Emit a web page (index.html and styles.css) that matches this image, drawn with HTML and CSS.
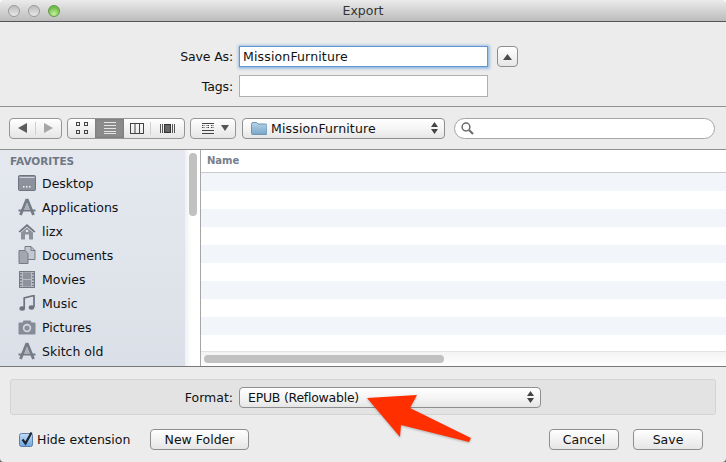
FILE: index.html
```html
<!DOCTYPE html>
<html>
<head>
<title>Export</title>
<link rel="stylesheet" href="styles.css">
</head>
<body>

<div class="window">
  <div class="titlebar">
    <div class="lights">
      <span class="light"></span>
      <span class="light"></span>
      <span class="light light-green"></span>
    </div>
    <div class="title">Export</div>
  </div>

  <div class="form">
    <label class="form-label">Save As:</label>
    <div class="field field-focus">MissionFurniture</div>
    <button class="btn btn-up"><svg width="9" height="6" viewBox="0 0 9 6"><path d="M4.5 0 9 6H0z" fill="#4a4a4a"/></svg></button>
    <label class="form-label">Tags:</label>
    <div class="field"></div>
  </div>

  <div class="toolbar">
    <div class="seg seg-nav">
      <span class="seg-item seg-back"><svg width="9" height="10" viewBox="0 0 9 10"><path d="M0 5 9 0v10z" fill="#5c5c5c"/></svg></span>
      <span class="seg-item seg-forward"><svg width="9" height="10" viewBox="0 0 9 10"><path d="M9 5 0 0v10z" fill="#a6a6a6"/></svg></span>
    </div>

    <div class="seg seg-views">
      <span class="seg-item view-icons">
        <svg width="12" height="12" viewBox="0 0 12 12" fill="none" stroke="#444"><rect x=".5" y=".5" width="3" height="3"/><rect x="8.5" y=".5" width="3" height="3"/><rect x=".5" y="8.5" width="3" height="3"/><rect x="8.5" y="8.5" width="3" height="3"/></svg>
      </span>
      <span class="seg-item view-list">
        <svg width="12" height="12" viewBox="0 0 12 12" stroke="#e4e4e4"><path d="M0 .5h12M0 3.5h12M0 6.5h12M0 9.5h12M0 11.5h12"/></svg>
      </span>
      <span class="seg-item view-columns">
        <svg width="14" height="11" viewBox="0 0 14 11" fill="none" stroke="#444"><rect x=".5" y=".5" width="13" height="10"/><path d="M5 .5v10M9.5 .5v10"/></svg>
      </span>
      <span class="seg-item view-flow">
        <svg width="15" height="11" viewBox="0 0 15 11"><path d="M.5 1v9M2.5 1v9M12.5 1v9M14.5 1v9" stroke="#555" fill="none"/><rect x="4.5" y="1.5" width="6" height="8" fill="#666" stroke="#333"/></svg>
      </span>
    </div>

    <div class="seg seg-arrange">
      <svg width="12" height="11" viewBox="0 0 12 11" fill="none" stroke="#444"><path d="M0 .5h12M0 7.5h12M0 10.5h12"/><path d="M0 2.500h3M4.500 2.500h3M9 2.500h3M0 4.500h3M4.500 4.500h3M9 4.500h3" stroke-dasharray="1 .5"/></svg>
      <svg width="8" height="6" viewBox="0 0 8 6"><path d="M0 0h8L4 6z" fill="#555"/></svg>
    </div>

    <div class="popup popup-path">
      <svg class="folder" width="16" height="13" viewBox="0 0 16 13"><path d="M.5 2.500Q.5 .5 2 .5h3.500l1.500 1.500h7.500q1.500 0 1.500 1.500v8q0 1-1 1H1.500q-1 0-1-1z" fill="url(#folderFill)" stroke="#6d95b5"/><defs><linearGradient id="folderFill" x1="0" y1="0" x2="0" y2="1"><stop offset="0" stop-color="#b9d4e8"/><stop offset="1" stop-color="#79a6c8"/></linearGradient></defs></svg>
      <span class="popup-text path-text">MissionFurniture</span>
      <svg class="updown" width="7" height="12" viewBox="0 0 7 12"><path d="M3.500 0 7 5H0zM3.500 12 0 7h7z" fill="#444"/></svg>
    </div>

    <div class="search">
      <svg width="13" height="13" viewBox="0 0 13 13" fill="none" stroke="#6b6b6b"><circle cx="5" cy="5" r="3.900" stroke-width="1.500"/><path d="M8 8l4 4" stroke-width="2.200"/></svg>
    </div>
  </div>

  <div class="browser">
    <div class="sidebar">
      <div class="side-head">FAVORITES</div>

      <div class="side-item">
        <svg class="side-icon" width="18" height="16" viewBox="0 0 18 16"><rect x=".5" y=".5" width="17" height="15" rx="1" fill="#8b929c" stroke="#6d747f"/><rect x="1.500" y="2" width="15" height="1" fill="#cfd3da"/><path d="M5 11h1.500v1.500H5zM8 11h1.500v1.500H8zM11 11h1.500v1.500H11z" fill="#f2f3f5"/></svg>
        <span>Desktop</span>
      </div>
      <div class="side-item">
        <svg class="side-icon" width="18" height="18" viewBox="0 0 18 18"><path d="M9 1 2.500 17M9 1l6.500 16" stroke="#757c87" stroke-width="2.800" fill="none"/><path d="M.5 12.500h17" stroke="#757c87" stroke-width="2"/><path d="M9 5 6.500 11.500h5z" fill="#a9afb8"/></svg>
        <span>Applications</span>
      </div>
      <div class="side-item">
        <svg class="side-icon" width="18" height="17" viewBox="0 0 18 17"><path d="M9 1 .5 8.500 2 9.500 9 3.500l7 6 1.500-1z" fill="#6f7681"/><path d="M3 9.500 9 4.500l6 5v7h-4v-5H7v5H3z" fill="#8b929c"/><circle cx="9" cy="8" r="1.300" fill="#e6e8ec"/></svg>
        <span>lizx</span>
      </div>
      <div class="side-item">
        <svg class="side-icon" width="18" height="18" viewBox="0 0 18 18"><path d="M7 .5h6l4 4v9H7z" fill="#c4c8cf" stroke="#757c87"/><path d="M1 4.500h6l3 3v10H1z" fill="#a2a8b1" stroke="#757c87"/><path d="M13 .5v4h4" fill="none" stroke="#757c87"/></svg>
        <span>Documents</span>
      </div>
      <div class="side-item">
        <svg class="side-icon side-icon-narrow" width="16" height="17" viewBox="0 0 16 17"><rect x=".5" y=".5" width="15" height="16" fill="#b9bec6" stroke="#727985"/><rect x="4" y="1.500" width="8" height="6.500" fill="#8c939d"/><rect x="4" y="9" width="8" height="6.500" fill="#8c939d"/><path d="M2 2v13M14 2v13" stroke="#686f7a" stroke-width="1.600" stroke-dasharray="1.500 1.500"/></svg>
        <span>Movies</span>
      </div>
      <div class="side-item">
        <svg class="side-icon side-icon-narrow" width="16" height="16" viewBox="0 0 16 16"><path d="M5.200 13V3L15 .5V12" stroke="#6d747f" stroke-width="1.700" fill="none"/><ellipse cx="3.200" cy="13.500" rx="2.800" ry="2.200" fill="#6d747f"/><ellipse cx="12.500" cy="12.500" rx="2.800" ry="2.200" fill="#6d747f"/></svg>
        <span>Music</span>
      </div>
      <div class="side-item">
        <svg class="side-icon" width="18" height="15" viewBox="0 0 18 15"><path d="M1.500 2.500h3l1-2h7l1 2h3q1 0 1 1v10q0 1-1 1h-15q-1 0-1-1v-10q0-1 1-1z" fill="#858c97"/><circle cx="9" cy="8" r="4.200" fill="#d6d9de"/><circle cx="9" cy="8" r="2.600" fill="#8a919c"/></svg>
        <span>Pictures</span>
      </div>
      <div class="side-item">
        <svg class="side-icon" width="18" height="18" viewBox="0 0 18 18"><path d="M9 1 2.500 17M9 1l6.500 16" stroke="#757c87" stroke-width="2.800" fill="none"/><path d="M.5 12.500h17" stroke="#757c87" stroke-width="2"/><path d="M9 5 6.500 11.500h5z" fill="#a9afb8"/></svg>
        <span>Skitch old</span>
      </div>
    </div>

    <div class="side-scroll"><div class="side-thumb"></div></div>

    <div class="list">
      <div class="list-head">Name</div>
      <div class="list-rows">
        <div class="row"></div><div class="row"></div><div class="row"></div>
        <div class="row"></div><div class="row"></div><div class="row"></div>
        <div class="row"></div><div class="row"></div><div class="row"></div>
      </div>
      <div class="hscroll"><div class="hthumb"></div></div>
    </div>
  </div>

  <div class="footer">
    <div class="format-box">
      <label class="format-label">Format:</label>
      <div class="popup popup-format">
        <span class="popup-text format-text">EPUB (Reflowable)</span>
        <svg class="updown" width="7" height="12" viewBox="0 0 7 12"><path d="M3.500 0 7 5H0zM3.500 12 0 7h7z" fill="#444"/></svg>
      </div>
    </div>
    <div class="actions">
      <span class="check">
        <svg width="16" height="16" viewBox="0 0 16 16"><rect x=".5" y="2.500" width="13" height="13" rx="2" fill="url(#checkFill)" stroke="#5b7fa8"/><path d="M3.500 8.500l3 4 6-11" fill="none" stroke="#1c2530" stroke-width="2.200"/><defs><linearGradient id="checkFill" x1="0" y1="0" x2="0" y2="1"><stop offset="0" stop-color="#c3dcf5"/><stop offset="1" stop-color="#6fa6de"/></linearGradient></defs></svg>
      </span>
      <span class="check-label">Hide extension</span>
      <button class="btn btn-folder">New Folder</button>
      <span class="spacer"></span>
      <button class="btn btn-cancel">Cancel</button>
      <button class="btn btn-save">Save</button>
    </div>
  </div>

  <svg class="red-arrow" width="110" height="52" viewBox="0 0 110 52">
    <path d="M6 4 56 1 49 14 110 44 108 48 40 31 39 43z" fill="#ff2f00"/>
  </svg>
</div>

</body>
</html>
```

FILE: styles.css
```css
html, body {
  margin: 0;
  height: 100%;
}

body {
  font-family: "DejaVu Sans", sans-serif;
  font-size: 12.5px;
  color: #111;
  background: linear-gradient(#fff 50%, #666 50%);
  overflow: hidden;
}

.window {
  position: relative;
  display: flex;
  flex-direction: column;
  width: 726px;
  height: 462px;
  background: #ececec;
  border-radius: 4px;
  overflow: hidden;
}

/* title bar */
.titlebar {
  display: flex;
  align-items: center;
  height: 21px;
  flex: none;
  background: linear-gradient(#ebebeb, #bcbcbc);
  border-bottom: 1px solid #555;
}

.lights {
  display: flex;
  gap: 8px;
  width: 60px;
  padding-left: 8px;
  box-sizing: border-box;
  margin-right: -60px;
}

.light {
  width: 12px;
  height: 12px;
  flex: none;
  border-radius: 50%;
  box-sizing: border-box;
  border: 1px solid #9a9a9a;
  background: linear-gradient(#bcbcbc, #e8e8e8);
}

.light-green {
  border-color: #5f9a45;
  background: radial-gradient(circle at 50% 80%, #c5f09a, #6fbd4c 70%);
}

.title {
  flex: 1;
  text-align: center;
  color: #333;
}

/* save as / tags */
.form {
  display: grid;
  grid-template-columns: 233px 249px 23px;
  grid-template-rows: 21px 22px;
  column-gap: 6px;
  row-gap: 8px;
  align-items: center;
  height: 84px;
  flex: none;
  box-sizing: border-box;
  padding-top: 24px;
}

.form-label {
  text-align: right;
  letter-spacing: -.15px;
}

.field {
  height: 22px;
  box-sizing: border-box;
  background: #fff;
  border: 1px solid #b0b0b0;
  line-height: 20px;
  padding-left: 3px;
  letter-spacing: .15px;
}

.field-focus {
  height: 21px;
  border: 1px solid #5f97d2;
  box-shadow: 0 0 3px 1.5px #85b0dd;
  line-height: 20px;
}

.btn {
  font-family: inherit;
  font-size: 12.5px;
  color: #111;
  height: 21px;
  padding: 0;
  box-sizing: border-box;
  background: linear-gradient(#fff, #f2f2f2 50%, #e6e6e6);
  border: 1px solid #8e8e8e;
  border-radius: 4px;
}

.btn-up {
  display: flex;
  align-items: center;
  justify-content: center;
  margin-left: 3px;
  width: 21px;
}

/* toolbar */
.toolbar {
  display: flex;
  align-items: center;
  height: 42px;
  flex: none;
  padding-left: 9px;
  border-top: 1px solid #909090;
}

.seg {
  display: flex;
  align-items: center;
  height: 21px;
  box-sizing: border-box;
  background: linear-gradient(#fff, #f2f2f2 50%, #e6e6e6);
  border: 1px solid #959595;
  border-radius: 4px;
  overflow: hidden;
}

.seg-item {
  display: flex;
  align-items: center;
  justify-content: center;
  height: 100%;
  box-sizing: border-box;
}

.seg-nav {
  width: 53px;
}

.seg-back {
  width: 26px;
  border-right: 1px solid #d0d0d0;
  height: 13px;
}

.seg-forward {
  width: 25px;
}

.seg-views {
  width: 118px;
  margin-left: 5px;
}

.view-icons {
  width: 27px;
}

.view-list {
  width: 29px;
  background: #8b8b8b;
  box-shadow: inset 0 0 2px #666;
}

.view-columns {
  width: 27px;
  border-right: 1px solid #d0d0d0;
  height: 13px;
}

.view-flow {
  width: 33px;
}

.seg-arrange {
  width: 46px;
  margin-left: 5px;
  gap: 7px;
  padding-left: 11px;
}

.popup {
  display: flex;
  align-items: center;
  height: 21px;
  box-sizing: border-box;
  background: linear-gradient(#fff, #f5f5f5 50%, #e6e6e6);
  border: 1px solid #8e8e8e;
  border-radius: 4px;
}

.popup-path {
  width: 203px;
  margin-left: 6px;
  padding-left: 8px;
}

.folder {
  margin-right: 4px;
}

.popup-text {
  flex: 1;
}

.path-text {
  letter-spacing: .15px;
}

.format-text {
  letter-spacing: -.25px;
}

.updown {
  margin-right: 6px;
}

.search {
  display: flex;
  align-items: center;
  width: 261px;
  height: 21px;
  margin-left: 9px;
  padding-left: 6px;
  box-sizing: border-box;
  background: #fff;
  border: 1px solid #a5a5a5;
  border-radius: 11px;
}

/* file browser */
.browser {
  display: flex;
  height: 216px;
  flex: none;
  border-top: 1px solid #909090;
  border-bottom: 1px solid #787878;
  overflow: hidden;
}

.sidebar {
  width: 185px;
  flex: none;
  background: linear-gradient(#e5e8ef, #dbe0e8);
  overflow: hidden;
}

.side-head {
  height: 21px;
  line-height: 23px;
  padding-left: 10px;
  font-size: 10.5px;
  font-weight: bold;
  color: #6f7885;
}

.side-item {
  display: flex;
  align-items: center;
  height: 24px;
  padding-left: 18px;
}

.side-icon {
  flex: none;
  margin-right: 6px;
}

.side-icon-narrow {
  margin-left: 1px;
  margin-right: 7px;
}

.side-scroll {
  width: 16px;
  flex: none;
  box-sizing: border-box;
  padding: 3px 3px 0 4px;
  background: linear-gradient(90deg, #f0f0f0, #fff 40%, #fff);
  border-right: 1px solid #a6a6a6;
}

.side-thumb {
  height: 63px;
  border-radius: 4px;
  background: #c1c1c1;
}

.list {
  flex: 1;
  display: flex;
  flex-direction: column;
  min-width: 0;
  background: #fff;
}

.list-head {
  height: 22px;
  flex: none;
  line-height: 22px;
  padding-left: 6px;
  font-size: 10px;
  font-weight: bold;
  color: #76808e;
  border-bottom: 1px solid #cacaca;
}

.list-rows {
  flex: 1;
  overflow: hidden;
}

.row {
  height: 18px;
}

.row:nth-child(odd) {
  background: #f2f5fa;
}

.hscroll {
  height: 15px;
  flex: none;
  box-sizing: border-box;
  padding: 3px 0 0 3px;
  background: linear-gradient(#f3f3f3, #fff);
  border-top: 1px solid #e2e2e2;
}

.hthumb {
  width: 240px;
  height: 8px;
  border-radius: 4px;
  background: #c1c1c1;
}

/* bottom */
.footer {
  flex: 1;
  padding: 12px 10px 0;
}

.format-box {
  display: flex;
  align-items: center;
  height: 36px;
  box-sizing: border-box;
  background: #e3e3e3;
  border: 1px solid #d3d3d3;
  border-radius: 3px;
}

.format-label {
  width: 222px;
  text-align: right;
  margin-right: 6px;
}

.popup-format {
  width: 302px;
  padding-left: 8px;
}

.actions {
  display: flex;
  align-items: center;
  height: 21px;
  margin-top: 14px;
  padding-left: 9px;
}

.check {
  display: flex;
  width: 18px;
  margin-top: -2px;
}

.check-label {
  width: 113px;
}

.btn-folder {
  width: 99px;
}

.spacer {
  flex: 1;
}

.btn-cancel {
  width: 70px;
}

.btn-save {
  width: 70px;
  margin-left: 14px;
  margin-right: 13px;
}

/* red annotation arrow */
.red-arrow {
  position: absolute;
  left: 361px;
  top: 394px;
  filter: drop-shadow(0 1px 1px rgba(0, 0, 0, .25));
}
```
